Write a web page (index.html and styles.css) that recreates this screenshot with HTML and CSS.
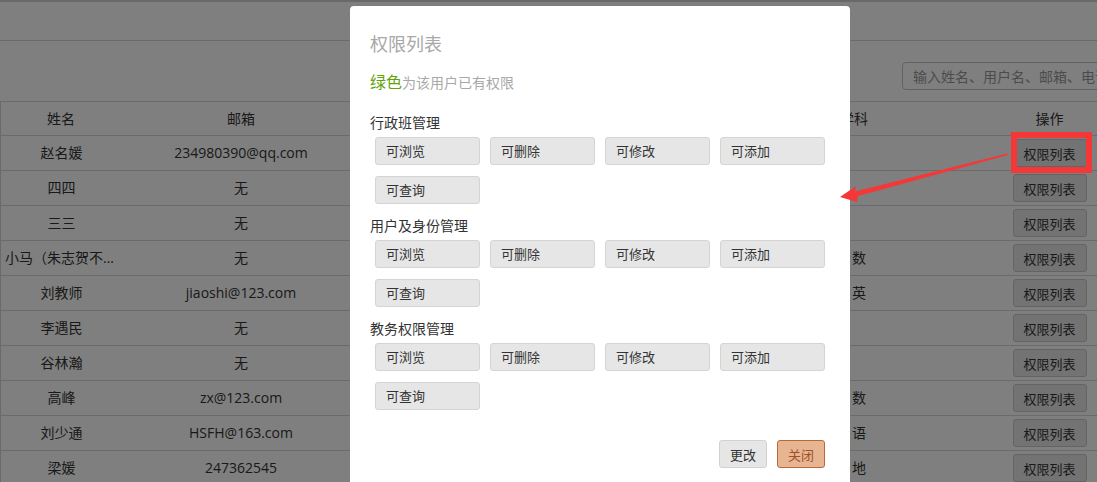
FILE: index.html
```html
<!DOCTYPE html>
<html>
    <head>
        <meta charset="utf-8">
        <link rel="stylesheet" href="styles.css">
    </head>
    <body>
        <div class="topbar"></div>
        <div class="toolbar">
            <input class="search" type="text" placeholder="输入姓名、用户名、邮箱、电话">
        </div>
        <table class="users">
            <colgroup>
                <col class="w-name"><col class="w-mail"><col class="w-user"><col class="w-phone"><col class="w-subj"><col class="w-op">
            </colgroup>
            <thead>
                <tr><th>姓名</th><th>邮箱</th><th>用户名</th><th>电话</th><th>学科</th><th>操作</th></tr>
            </thead>
            <tbody>
                <tr><td class="name">赵名媛</td><td>234980390@qq.com</td><td>zhaomy</td><td>13800000001</td><td class="subj"></td><td class="op"><button class="list-btn">权限列表</button></td></tr>
                <tr><td class="name">四四</td><td>无</td><td>sisi</td><td>无</td><td class="subj"></td><td class="op"><button class="list-btn">权限列表</button></td></tr>
                <tr><td class="name">三三</td><td>无</td><td>sansan</td><td>无</td><td class="subj"></td><td class="op"><button class="list-btn">权限列表</button></td></tr>
                <tr><td class="name">小马（朱志贺不是我）</td><td>无</td><td>xiaoma</td><td>无</td><td class="subj">数</td><td class="op"><button class="list-btn">权限列表</button></td></tr>
                <tr><td class="name">刘教师</td><td>jiaoshi@123.com</td><td>jiaoshi</td><td>无</td><td class="subj">英</td><td class="op"><button class="list-btn">权限列表</button></td></tr>
                <tr><td class="name">李遇民</td><td>无</td><td>liym</td><td>无</td><td class="subj"></td><td class="op"><button class="list-btn">权限列表</button></td></tr>
                <tr><td class="name">谷林瀚</td><td>无</td><td>gulh</td><td>无</td><td class="subj"></td><td class="op"><button class="list-btn">权限列表</button></td></tr>
                <tr><td class="name">高峰</td><td>zx@123.com</td><td>gaofeng</td><td>无</td><td class="subj">数</td><td class="op"><button class="list-btn">权限列表</button></td></tr>
                <tr><td class="name">刘少通</td><td>HSFH@163.com</td><td>liust</td><td>无</td><td class="subj">语</td><td class="op"><button class="list-btn">权限列表</button></td></tr>
                <tr><td class="name">梁媛</td><td>247362545</td><td>liangy</td><td>无</td><td class="subj">地</td><td class="op"><button class="list-btn">权限列表</button></td></tr>
            </tbody>
        </table>

        <div class="mask"></div>

        <div class="modal">
            <h3 class="modal-title">权限列表</h3>
            <p class="tip"><span class="green">绿色</span>为该用户已有权限</p>

            <div class="section">
                <div class="section-name">行政班管理</div>
                <div class="perms">
                    <span class="perm">可浏览</span>
                    <span class="perm">可删除</span>
                    <span class="perm">可修改</span>
                    <span class="perm">可添加</span>
                    <span class="perm">可查询</span>
                </div>
            </div>
            <div class="section">
                <div class="section-name">用户及身份管理</div>
                <div class="perms">
                    <span class="perm">可浏览</span>
                    <span class="perm">可删除</span>
                    <span class="perm">可修改</span>
                    <span class="perm">可添加</span>
                    <span class="perm">可查询</span>
                </div>
            </div>
            <div class="section">
                <div class="section-name">教务权限管理</div>
                <div class="perms">
                    <span class="perm">可浏览</span>
                    <span class="perm">可删除</span>
                    <span class="perm">可修改</span>
                    <span class="perm">可添加</span>
                    <span class="perm">可查询</span>
                </div>
            </div>

            <div class="modal-footer">
                <button class="btn btn-default">更改</button>
                <button class="btn btn-close">关闭</button>
            </div>
        </div>

        <!-- screenshot annotation -->
        <div class="mark"></div>
        <svg class="arrow" width="1097" height="482" viewBox="0 0 1097 482">
            <polygon points="840,197 856,186 855,191.5 1007,153.5 1008,155 858,196 857,202" fill="#f43838"/>
        </svg>
    </body>
</html>
```
FILE: styles.css
```css
body{
    margin:0;
    font-family:"Open Sans","Noto Sans CJK SC",sans-serif;
    font-size:14px;
    color:#333;
    background:#fff;
    height:482px;
    overflow:hidden;
    position:relative;
}
.topbar{
    height:38px;
    border-top:2px solid #d2d2d2;
    border-bottom:1px solid #d6d6d6;
}
.toolbar{
    height:60px;
    box-sizing:border-box;
    padding-top:21px;
    display:flex;
    justify-content:flex-end;
    align-items:flex-start;
}
.search{
    width:220px;
    height:28px;
    box-sizing:border-box;
    margin-right:-25px;
    border:1px solid #c4c4c4;
    border-radius:4px;
    padding:0 10px;
    font-family:inherit;
    font-size:14px;
    outline:none;
}
.search::placeholder{
    color:#999;
}
.users{
    width:100%;
    table-layout:fixed;
    border-collapse:separate;
    border-spacing:0;
    border-top:1px solid #d6d6d6;
    border-left:1px solid #d6d6d6;
}
.w-name{width:120px;}
.w-mail{width:240px;}
.w-user{width:170px;}
.w-phone{width:176px;}
.w-subj{width:294px;}
.w-op{width:97px;}
.users th{
    font-weight:normal;
    padding:7px 6px 6px;
    line-height:20px;
    text-align:center;
}
.users td{
    border-top:1px solid #d6d6d6;
    padding:7px 6px;
    line-height:20px;
    text-align:center;
    white-space:nowrap;
    overflow:hidden;
    text-overflow:ellipsis;
}
.users td.name{
    padding:7px 3px 7px 4px;
}
.users td.subj{
    padding-left:16px;
}
.users td.op{
    padding:3px 6px;
}
.list-btn{
    height:28px;
    width:74px;
    box-sizing:border-box;
    padding:0;
    border:1px solid #c8c8c8;
    border-radius:3px;
    background:#e6e6e6;
    color:#333;
    font-family:inherit;
    font-size:13px;
    vertical-align:middle;
}
.mask{
    position:absolute;
    left:0;
    top:0;
    right:0;
    bottom:0;
    background:rgba(0,0,0,0.5);
}
.modal{
    position:absolute;
    left:350px;
    top:6px;
    width:500px;
    height:520px;
    box-sizing:border-box;
    padding:26px 25px 0 20px;
    background:#fff;
    border-radius:4px;
}
.modal-title{
    margin:0 0 16px;
    font-size:18px;
    line-height:24px;
    font-weight:normal;
    color:#a8a8a8;
}
.tip{
    margin:0 0 20px;
    line-height:20px;
    font-size:14px;
    color:#a8a8a8;
}
.green{
    color:#62a30c;
    font-size:16px;
}
.section{
    margin-bottom:12px;
}
.section-name{
    line-height:20px;
    margin-bottom:4px;
    color:#333;
}
.perms{
    display:flex;
    flex-wrap:wrap;
    gap:11px 10px;
    padding-left:5px;
}
.perm{
    width:105px;
    height:28px;
    box-sizing:border-box;
    border:1px solid #d4d4d4;
    border-radius:3px;
    background:#e6e6e6;
    padding-left:10px;
    font-size:13px;
    line-height:26px;
    color:#333;
}
.modal-footer{
    display:flex;
    justify-content:flex-end;
    gap:10px;
    margin-top:30px;
}
.btn{
    height:28px;
    width:48px;
    box-sizing:border-box;
    padding:0;
    border-radius:3px;
    font-family:inherit;
    font-size:13px;
}
.btn-default{
    border:1px solid #d2d2d2;
    background:#e6e6e6;
    color:#333;
}
.btn-close{
    border:1px solid #b9683a;
    background:#e8b593;
    color:#9c5226;
}
.mark{
    position:absolute;
    left:1011px;
    top:132px;
    width:81px;
    height:41px;
    box-sizing:border-box;
    border:6px solid #f43838;
}
.arrow{
    position:absolute;
    left:0;
    top:0;
    pointer-events:none;
}
```
